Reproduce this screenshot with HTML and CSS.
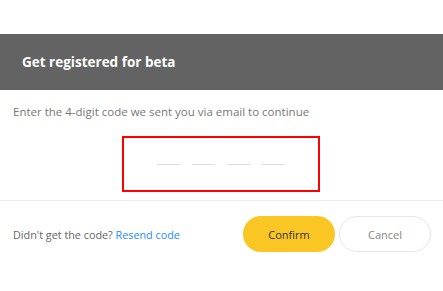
FILE: index.html
```
<!DOCTYPE html>
<html lang="en">
<head>
    <meta charset="UTF-8">
    <meta name="viewport" content="width=device-width, initial-scale=1.0">
    <title>Get registered for beta</title>
    <link rel="stylesheet" href="styles.css">
</head>
<body>
    <div class="modal">
        <div class="modal-header">
            <h2>Get registered for beta</h2>
        </div>
        <div class="modal-body">
            <p class="hint">Enter the 4-digit code we sent you via email to continue</p>
            <div class="code-box">
                <span class="digit"></span>
                <span class="digit"></span>
                <span class="digit"></span>
                <span class="digit"></span>
            </div>
        </div>
        <div class="modal-footer">
            <div class="resend">Didn't get the code? <a href="#">Resend code</a></div>
            <div class="actions">
                <button class="btn btn-confirm">Confirm</button>
                <button class="btn btn-cancel">Cancel</button>
            </div>
        </div>
    </div>
</body>
</html>
```

FILE: styles.css
```
body {
    margin: 0;
    background: #fff;
    font-family: "Open Sans", "Noto Sans", sans-serif;
}
.modal {
    padding-top: 34px;
}
.modal-header {
    height: 56px;
    background-color: #636363;
    display: flex;
    align-items: center;
    padding: 0 22px;
}
.modal-header h2 {
    margin: 0;
    color: #fff;
    font-size: 13.5px;
    font-weight: bold;
}
.modal-body {
    padding: 14px 13px 8px;
    border-bottom: 1px solid #ececec;
}
.hint {
    margin: 0;
    font-size: 11.5px;
    line-height: 16px;
    color: #777;
}
.code-box {
    width: 194px;
    height: 52px;
    margin: 16px auto 0;
    border: 2px solid #f00;
    display: flex;
    justify-content: center;
    align-items: center;
    gap: 12px;
    position: relative;
    left: -1px;
}
.digit {
    width: 23px;
    height: 1px;
    background: #ddd;
}
.modal-footer {
    display: flex;
    align-items: center;
    justify-content: space-between;
    padding: 15px 12px 0 13px;
}
.resend {
    font-size: 10.8px;
    color: #666;
}
.resend a {
    color: #1e8cff;
    text-decoration: none;
}
.actions {
    display: flex;
    gap: 4px;
}
.btn {
    width: 92px;
    height: 36px;
    border-radius: 18px;
    font-family: inherit;
    font-size: 11px;
    cursor: pointer;
}
.btn-confirm {
    background-color: #f9c623;
    border: none;
    color: #333;
}
.btn-cancel {
    background: #fff;
    border: 1px solid #e6e6e6;
    color: #888;
}
```
